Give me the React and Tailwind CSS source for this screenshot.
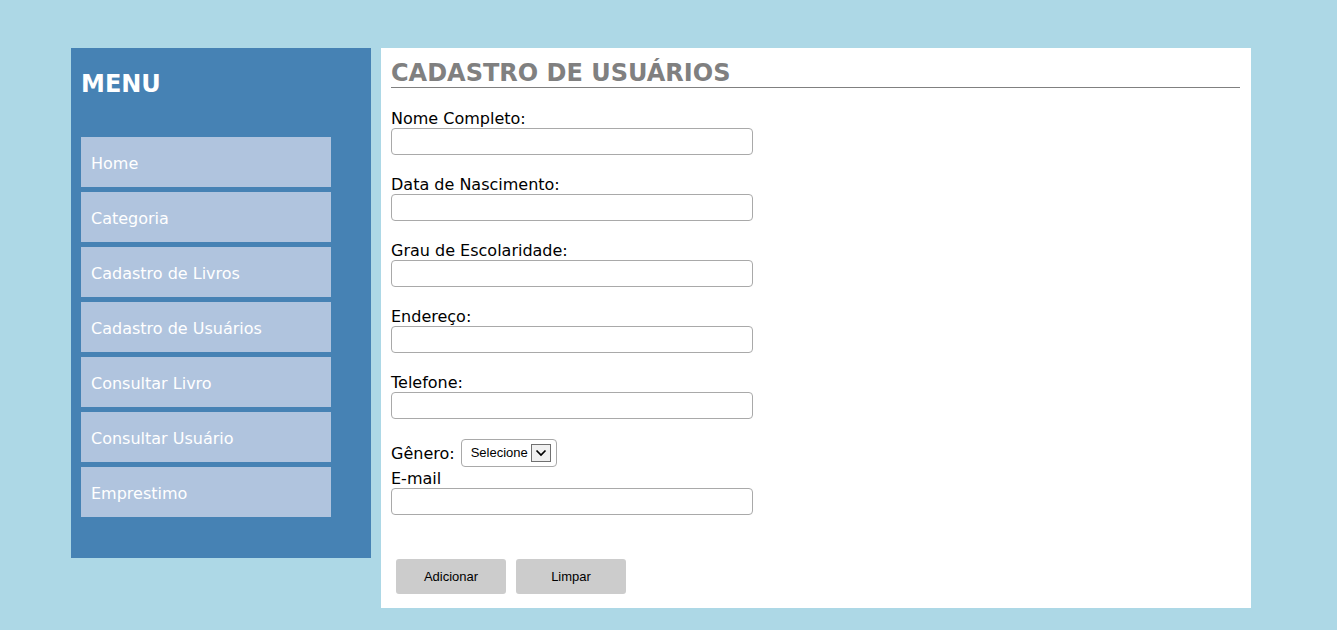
const menu = ['Home', 'Categoria', 'Cadastro de Livros', 'Cadastro de Usuários', 'Consultar Livro', 'Consultar Usuário', 'Emprestimo'];

const fields = ['Nome Completo:', 'Data de Nascimento:', 'Grau de Escolaridade:', 'Endereço:', 'Telefone:'];

function Field({ label }) {
    return (
        <div className="mb-[20px]">
            <label className="block text-[16px] leading-[19px] text-black">{label}</label>
            <input type="text" className="block w-[362px] h-[27px] border border-[#a9a9a9] rounded-[4px] bg-white outline-none" />
        </div>
    );
}

export default function App() {
    return (
        <div className="min-h-[630px] w-full bg-[#add8e6] font-['DejaVu_Sans',Verdana,sans-serif]">
            <div className="flex items-start gap-[10px] pl-[71px] pt-[48px]">
                <aside className="w-[300px] h-[510px] bg-[#4682b4] px-[10px]">
                    <h2 className="text-white font-bold text-[24px] leading-[28px] pt-[22px] pb-[39px]">MENU</h2>
                    <nav className="flex flex-col gap-[5px]">
                        {menu.map(item => (
                            <a key={item} className="w-[250px] h-[50px] bg-[#b0c4de] text-white text-[16px] flex items-center pl-[10px] pt-[3px]">{item}</a>
                        ))}
                    </nav>
                </aside>
                <main className="w-[870px] h-[560px] bg-white pl-[10px] pr-[11px] pt-[12px]">
                    <h2 className="text-[#808080] font-bold text-[24px] leading-[27px] border-b-[1px] border-[#808080] mb-[21px]">CADASTRO DE USUÁRIOS</h2>
                    {fields.map(f => <Field key={f} label={f} />)}
                    <div className="flex items-center gap-[6px] mt-[1px]">
                        <span className="text-[16px] leading-[19px] text-black">Gênero:</span>
                        <div className="h-[28px] border border-[#a9a9a9] rounded-[4px] flex items-center pl-[9px] pr-[5px] gap-[3px]">
                            <span className="text-[13px] text-black font-['Liberation_Sans',Arial,sans-serif]">Selecione</span>
                            <span className="w-[20px] h-[18px] border border-[#707070] bg-[#f0f0f0] flex items-center justify-center">
                                <svg width="12" height="8" viewBox="0 0 12 8"><path d="M1.5 1.5 L6 6 L10.5 1.5" fill="none" stroke="#000" strokeWidth="1.7" /></svg>
                            </span>
                        </div>
                    </div>
                    <label className="block text-[16px] leading-[19px] text-black mt-[2px]">E-mail</label>
                    <input type="text" className="block w-[362px] h-[27px] border border-[#a9a9a9] rounded-[4px] bg-white outline-none" />
                    <div className="flex gap-[10px] mt-[44px] pl-[5px]">
                        <button className="w-[110px] h-[35px] bg-[#cccccc] rounded-[3px] text-[13px] text-black font-['Liberation_Sans',Arial,sans-serif]">Adicionar</button>
                        <button className="w-[110px] h-[35px] bg-[#cccccc] rounded-[3px] text-[13px] text-black font-['Liberation_Sans',Arial,sans-serif]">Limpar</button>
                    </div>
                </main>
            </div>
        </div>
    );
}
